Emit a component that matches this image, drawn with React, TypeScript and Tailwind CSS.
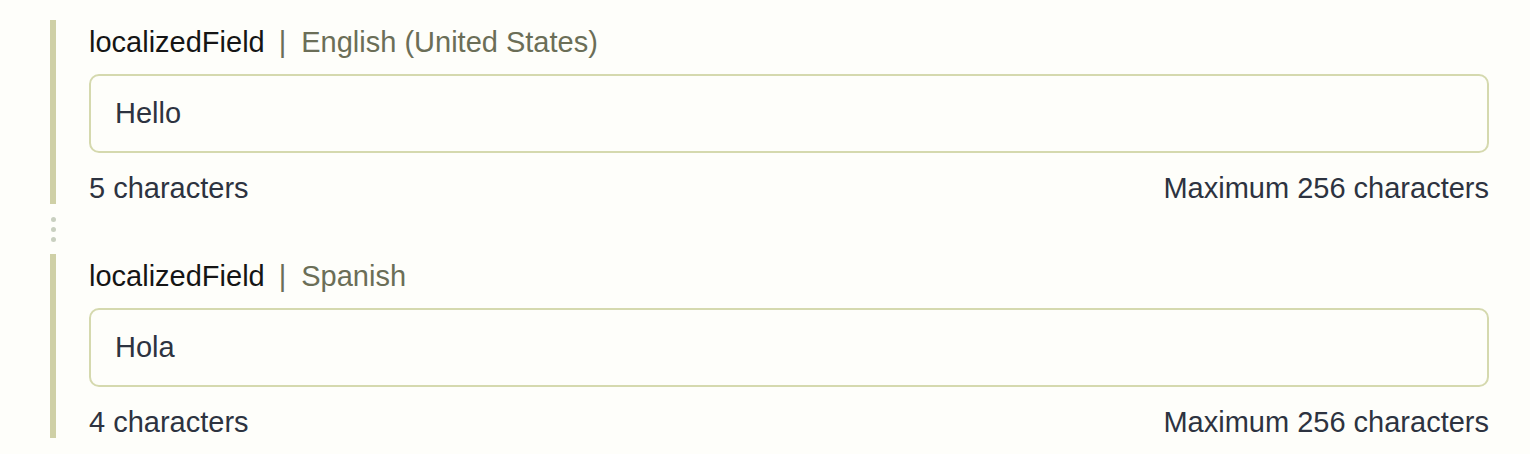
import React from "react";

function Section({ lang, value, maxLabel }: { lang: string; value: string; maxLabel: string }) {
  return (
    <div className="flex h-[184px]">
      <div className="w-[6px] shrink-0 bg-[#cfd0a6]" />
      <div className="ml-[33px] flex flex-1 flex-col pt-[7px]">
        <div className="flex h-[30px] items-center leading-[30px]">
          <span className="text-[#151515]">localizedField</span>
          <span className="ml-[14px] mr-[15px] text-[#6b6e57]">|</span>
          <span className="text-[#6b6e57]">{lang}</span>
        </div>
        <div className="mt-[17px] flex h-[79px] items-center rounded-[10px] border-2 border-[#d5d9ae] pl-[24px] text-[#2d3340]">
          {value}
        </div>
        <div className="mt-[20px] flex h-[30px] items-center justify-between leading-[30px] text-[#2d3340]">
          <span>{value.length} characters</span>
          <span>{maxLabel}</span>
        </div>
      </div>
    </div>
  );
}

export default function App() {
  return (
    <div
      className="h-[454px] w-[1530px] overflow-hidden bg-[#fefefa] pl-[50px] pr-[41px] pt-[20px] text-[29px]"
      style={{ fontFamily: '"Liberation Sans", Arial, sans-serif' }}
    >
      <Section lang="English (United States)" value="Hello" maxLabel="Maximum 256 characters" />
      <div className="flex h-[50px] w-[6px] flex-col items-center justify-center gap-[5px]">
        <div className="h-[5px] w-[5px] rounded-full bg-[#c9d0c0]" />
        <div className="h-[5px] w-[5px] rounded-full bg-[#c9d0c0]" />
        <div className="h-[5px] w-[5px] rounded-full bg-[#c9d0c0]" />
      </div>
      <Section lang="Spanish" value="Hola" maxLabel="Maximum 256 characters" />
    </div>
  );
}
